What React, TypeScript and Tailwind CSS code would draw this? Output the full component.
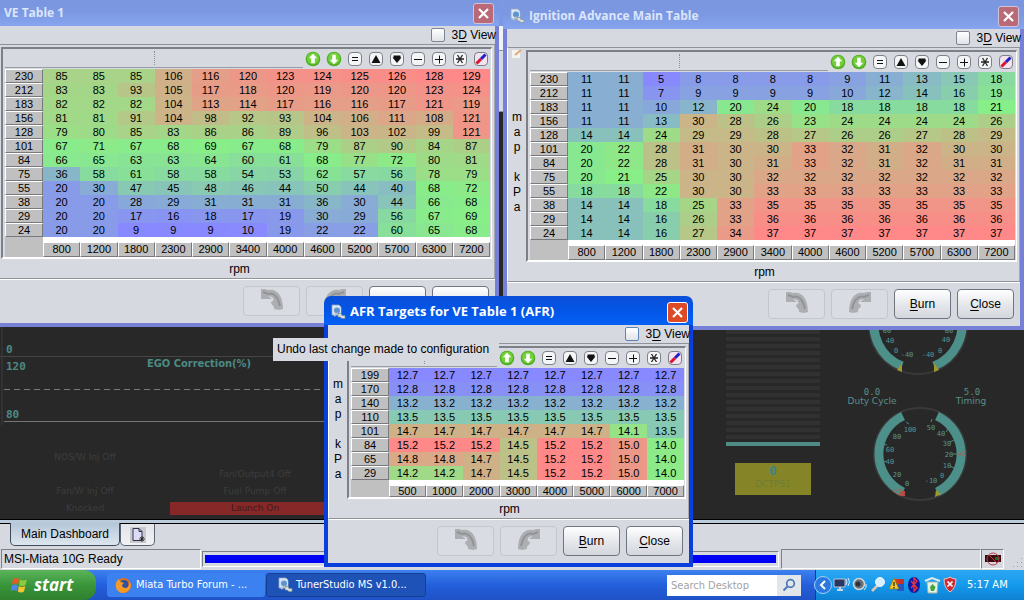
import { useId } from "react";
import type { ReactNode } from "react";
import { clsx } from "clsx";

type TuneTable = {
  title: string;
  rpm: number[];
  rows: { load: number; cells: number[] }[];
  digits: number;
};

const fill = (n: number, v: number) => Array<number>(n).fill(v);

const RPM = [800, 1200, 1800, 2300, 2900, 3400, 4000, 4600, 5200, 5700, 6300, 7200];

const VE_TABLE: TuneTable = {
  title: "VE Table 1",
  rpm: RPM,
  digits: 0,
  rows: [
    { load: 230, cells: [85, 85, 85, 106, 116, 120, 123, 124, 125, 126, 128, 129] },
    { load: 212, cells: [83, 83, 93, 105, 117, 118, 120, 119, 120, 120, 123, 124] },
    { load: 183, cells: [82, 82, 82, 104, 113, 114, 117, 116, 116, 117, 121, 119] },
    { load: 156, cells: [81, 81, 91, 104, 98, 92, 93, 104, 106, 111, 108, 121] },
    { load: 128, cells: [79, 80, 85, 83, 86, 86, 89, 96, 103, 102, 99, 121] },
    { load: 101, cells: [67, 71, 67, 68, 69, 67, 68, 79, 87, 90, 84, 87] },
    { load: 84, cells: [66, 65, 63, 63, 64, 60, 61, 68, 77, 72, 80, 81] },
    { load: 75, cells: [36, 58, 61, 58, 58, 54, 53, 62, 57, 56, 78, 79] },
    { load: 55, cells: [20, 30, 47, 45, 48, 46, 44, 50, 44, 40, 68, 72] },
    { load: 38, cells: [20, 20, 28, 29, 31, 31, 31, 36, 30, 44, 66, 68] },
    { load: 29, cells: [20, 20, 17, 16, 18, 17, 19, 30, 29, 56, 67, 69] },
    { load: 24, cells: [20, 20, 9, 9, 9, 10, 19, 22, 22, 60, 65, 68] },
  ],
};

const IGNITION_TABLE: TuneTable = {
  title: "Ignition Advance Main Table",
  rpm: RPM,
  digits: 0,
  rows: [
    { load: 230, cells: [11, 11, 5, 8, 8, 8, 8, 9, 11, 13, 15, 18] },
    { load: 212, cells: [11, 11, 7, 9, 9, 9, 9, 10, 12, 14, 16, 19] },
    { load: 183, cells: [11, 11, 10, 12, 20, 24, 20, 18, 18, 18, 18, 21] },
    { load: 156, cells: [11, 11, 13, 30, 28, 26, 23, 24, 24, 24, 24, 26] },
    { load: 128, cells: [14, 14, 24, 29, 29, 28, 27, 26, 26, 27, 28, 29] },
    { load: 101, cells: [20, 22, 28, 31, 30, 30, 33, 32, 31, 32, 30, 30] },
    { load: 84, cells: [20, 22, 28, 31, 30, 31, 33, 32, 31, 32, 31, 31] },
    { load: 75, cells: [20, 21, 25, 30, 30, ...fill(7, 32)] },
    { load: 55, cells: [18, 18, 22, 30, 30, ...fill(7, 33)] },
    { load: 38, cells: [14, 14, 18, 25, 33, ...fill(7, 35)] },
    { load: 29, cells: [14, 14, 16, 26, 33, ...fill(7, 36)] },
    { load: 24, cells: [14, 14, 16, 27, 34, ...fill(7, 37)] },
  ],
};

const AFR_TABLE: TuneTable = {
  title: "AFR Targets for VE Table 1 (AFR)",
  rpm: [500, 1000, 2000, 3000, 4000, 5000, 6000, 7000],
  digits: 1,
  rows: [
    { load: 199, cells: fill(8, 12.7) },
    { load: 170, cells: fill(8, 12.8) },
    { load: 140, cells: fill(8, 13.2) },
    { load: 110, cells: fill(8, 13.5) },
    { load: 101, cells: [...fill(6, 14.7), 14.1, 13.5] },
    { load: 84, cells: [15.2, 15.2, 15.2, 14.5, 15.2, 15.2, 15.0, 14.0] },
    { load: 65, cells: [14.8, 14.8, 14.7, 14.5, 15.2, 15.2, 15.0, 14.0] },
    { load: 29, cells: [14.2, 14.2, 14.7, 14.5, 15.2, 15.2, 15.0, 14.0] },
  ],
};

// blue (low) -> green (middle) -> red (high)
function heat(v: number, min: number, max: number) {
  const stops = [
    [136, 136, 255],
    [136, 238, 136],
    [255, 136, 136],
  ];
  const t = ((v - min) / (max - min)) * 2;
  const i = t >= 1 ? 1 : 0;
  const [r, g, b] = stops[i].map((c, k) => Math.round(c + (stops[i + 1][k] - c) * (t - i)));
  return `rgb(${r}, ${g}, ${b})`;
}

function AppIcon() {
  return (
    <svg width="16" height="16" viewBox="0 0 16 16" className="shrink-0">
      <path d="M2 1h7l2 2v8H2z" fill="#dfe8f4" stroke="#8fa4bf" strokeWidth=".8" />
      <circle cx="7" cy="6.500" r="3.600" fill="#5f93cf" stroke="#cfe4fb" strokeWidth="1.200" />
      <path d="M4 12l4-3" stroke="#b5c2c9" strokeWidth="1.800" />
      <path d="M8 9.500h3l1 2h3v3h-3l-2-1.500H8z" fill="#d6e0dc" stroke="#7d8d93" strokeWidth=".7" />
    </svg>
  );
}

function RoundArrow({ down }: { down?: boolean }) {
  return (
    <svg width="16" height="16" viewBox="0 0 16 16" className="-m-px">
      <circle cx="8" cy="8" r="7.300" fill="#4fae22" />
      <circle cx="8" cy="7.500" r="6" fill="#74cf3c" />
      <path
        d="M8 2.800l4.200 4.400H9.800v5H6.200v-5H3.800z"
        fill="#fff"
        transform={down ? "rotate(180 8 8)" : undefined}
      />
    </svg>
  );
}

function Key({ children, glow }: { children: ReactNode; glow?: boolean }) {
  return (
    <svg width="14" height="14" viewBox="0 0 14 14">
      <rect
        x=".5"
        y=".5"
        width="13"
        height="13"
        rx="3.500"
        fill={glow ? "#f1e3ef" : "#f4f5f7"}
        stroke="#7d8087"
      />
      {children}
    </svg>
  );
}

const TOOLS: { name: string; icon: ReactNode }[] = [
  { name: "Increase", icon: <RoundArrow /> },
  { name: "Decrease", icon: <RoundArrow down /> },
  { name: "Set to", icon: <Key><path d="M4 5.500h6M4 8.500h6" stroke="#111" /></Key> },
  { name: "Step up", icon: <Key><path d="M7 3l4.500 8h-9z" fill="#111" /></Key> },
  { name: "Step down", icon: <Key><path d="M3.500 3.500h7v2h1L7 11 2.500 5.500h1z" fill="#111" /></Key> },
  { name: "Subtract", icon: <Key><path d="M3 7.500h8" stroke="#111" /></Key> },
  { name: "Add", icon: <Key><path d="M3 7.500h8M7.500 3.500v8" stroke="#111" /></Key> },
  {
    name: "Multiply",
    icon: <Key><path d="M3 7h8M4.500 3l5 8M9.500 3l-5 8" stroke="#222" strokeWidth="1.300" /></Key>,
  },
  {
    name: "Interpolate",
    icon: (
      <Key glow>
        <path d="M2.500 11.500l4.500-4.500" stroke="#e01030" strokeWidth="3" />
        <path d="M7 7l4.500-4.500" stroke="#2020c8" strokeWidth="3" />
      </Key>
    ),
  },
];

function BentArrow({ redo }: { redo?: boolean }) {
  return (
    <svg width="24" height="24" viewBox="0 0 24 24" className="-mt-1">
      <g transform={redo ? "translate(24 0) scale(-1 1)" : undefined}>
        <path
          d="M1 2h4l3 1c9-2 15 6 15 19l-4 1-5-1c1-3-3-4-3-7 3-1 3-3 1-5l-4-1 4 3H1z"
          fill="#adaeb1"
        />
        <path d="M3 5l5 2c6-2 10 3 12 12" fill="none" stroke="#929396" strokeWidth="2" />
      </g>
    </svg>
  );
}

function ActionButton({ children, label, disabled }: { children: ReactNode; label?: string; disabled?: boolean }) {
  return (
    <button
      disabled={disabled}
      aria-label={label}
      className={clsx(
        "flex h-[30px] w-[57px] items-center justify-center rounded-[4px] border text-[12px]",
        disabled
          ? "border-[#c3c6cd] bg-[#d9dce2]"
          : "border-[#6f7580] bg-linear-to-b from-white via-[#e6e8ec] to-[#d3d6dc] text-black"
      )}
    >
      {children}
    </button>
  );
}

function TableGrid({ table }: { table: TuneTable }) {
  const all = table.rows.flatMap((r) => r.cells);
  const min = Math.min(...all);
  const max = Math.max(...all);
  const bevel = "border-t border-l border-b border-r border-t-white border-l-white border-b-[#77797d] border-r-[#77797d] bg-[#c0c0c0]";

  return (
    <table className="w-full table-fixed border-separate border-spacing-0 text-center text-[11px] leading-[12px] text-black">
      <colgroup>
        <col className="w-[38px]" />
        {table.rpm.map((r) => (
          <col key={r} />
        ))}
      </colgroup>
      <tbody>
        {table.rows.map((row) => (
          <tr key={row.load} className="h-[14px]">
            <th scope="row" className={clsx(bevel, "p-0 font-normal")}>
              {row.load}
            </th>
            {row.cells.map((v, i) => (
              <td key={i} className="p-0" style={{ backgroundColor: heat(v, min, max) }}>
                {v.toFixed(table.digits)}
              </td>
            ))}
          </tr>
        ))}
      </tbody>
      <tfoot>
        <tr>
          <td className="bg-[#c0c0c0] p-0" />
          {table.rpm.map((r) => (
            <th key={r} scope="col" className="bg-white p-0 pt-[5px] font-normal">
              <div className={clsx(bevel, table.rows.length > 8 ? "leading-[13px]" : "leading-[10px]")}>{r}</div>
            </th>
          ))}
        </tr>
      </tfoot>
    </table>
  );
}

type TableWindowProps = {
  table: TuneTable;
  loadLabel?: string;
  active?: boolean;
  className: string;
};

function TableWindow({ table, loadLabel = "", active, className }: TableWindowProps) {
  const id = useId();
  return (
    <section className={clsx("absolute", className)}>
      <header
        className={clsx(
          "flex h-[29px] items-center gap-1 rounded-t-[7px] pt-[3px] pr-[5px] pl-[6px]",
          active
            ? "bg-linear-to-b from-[#0a4fd8] via-[#0355e6] to-[#0561f5]"
            : "bg-linear-to-b from-[#7a96df] via-[#7c98e2] to-[#86a5ee]"
        )}
      >
        <AppIcon />
        <h2
          className={clsx(
            "flex-1 truncate font-['Open_Sans','Noto_Sans',sans-serif] font-bold",
            active ? "text-[13px] text-white" : "text-[12px] text-[#dbe6fa]"
          )}
        >
          {table.title}
        </h2>
        <button
          aria-label="Close window"
          className={clsx(
            "flex size-[21px] items-center justify-center rounded-[3px] border",
            active ? "border-white bg-[#dd4a26]" : "border-[#d3c4dc] bg-[#ba6a76]"
          )}
        >
          <svg width="13" height="13" viewBox="0 0 13 13">
            <path d="M2 2l9 9M11 2l-9 9" stroke="#fff" strokeWidth="2.200" />
          </svg>
        </button>
      </header>

      <div
        className={clsx(
          "border-x-4 border-b-4 bg-[#d6d9e0]",
          active ? "border-[#0a3fdc]" : "border-[#7680d6]"
        )}
      >
        <div className="-mr-1 flex h-[18px] items-center justify-end gap-[7px] overflow-hidden pr-[3px] text-[12px] text-black">
          <input
            id={id}
            type="checkbox"
            className={clsx(
              "size-[14px] appearance-none rounded-[2px] border bg-linear-to-b from-white to-[#e0e3e8]",
              active ? "border-[#5b84b8]" : "border-[#7d8592]"
            )}
          />
          <label htmlFor={id}>
            3<u className="underline-offset-2">D</u> View
          </label>
        </div>

        <div className="flex border-t border-b border-l border-t-[#8f9298] border-b-[#8f9298] border-l-white">
          <div className="flex w-[18px] flex-col items-center text-[12px] leading-[15px] text-black">
            <svg width="12" height="12" viewBox="0 0 12 12">
              <path d="M1 2h8v8H1z" fill="#f3f4f2" />
              <path d="M4 7l6-5" stroke="#e0ac72" strokeWidth="2" />
            </svg>
            <div className="flex flex-1 flex-col justify-center pb-4">
              {loadLabel.split("").map((c, i) => (
                <span key={i} className="h-[15px] text-center">
                  {c}
                </span>
              ))}
            </div>
          </div>
          <div className="min-w-0 flex-1 border-r border-[#a5a8ae]">
            <div className="mt-[2px] mr-[2px] border-t-2 border-r border-b-2 border-l-2 border-t-[#7d8087] border-r-white border-b-white border-l-[#7d8087] pr-px pl-[2px]">
              <div className="flex h-5 pb-px">
                <div className="flex flex-1 justify-center border-b border-[#9a9da3] py-[2px]">
                  <span className="border-l border-dotted border-[#8c8f96]" />
                </div>
                <div className="ml-[3px] flex items-center gap-[7px] pr-[2px]">
                  {TOOLS.map((t) => (
                    <button key={t.name} aria-label={t.name} className="size-[14px]">
                      {t.icon}
                    </button>
                  ))}
                </div>
              </div>
              <TableGrid table={table} />
            </div>
            <div className="pt-px pr-4 text-center text-[12px] leading-[18px] text-black">rpm</div>
          </div>
        </div>

        <div className="flex justify-end gap-[6px] border-t border-white pt-[6px] pr-[6px] pb-[7px]">
          <ActionButton disabled label="Undo">
            <BentArrow />
          </ActionButton>
          <ActionButton disabled label="Redo">
            <BentArrow redo />
          </ActionButton>
          <ActionButton>
            <span>
              <u className="underline-offset-2">B</u>urn
            </span>
          </ActionButton>
          <ActionButton>
            <span>
              <u className="underline-offset-2">C</u>lose
            </span>
          </ActionButton>
        </div>
      </div>
    </section>
  );
}

function EgoChart() {
  return (
    <svg viewBox="0 0 340 100" width="340" height="100" className="block font-['DejaVu_Sans_Mono',monospace] font-bold">
      <path d="M2 0V100" stroke="#3c3c3c" />
      <path d="M0 31.500H340" stroke="#454545" />
      <path d="M4 64.500H340" stroke="#7a7a7a" strokeDasharray="6 4" />
      <path d="M4 96.500H340" stroke="#757575" />
      <g fill="#4c8a84" fontSize="11">
        <text x="6" y="28">0</text>
        <text x="6" y="45">120</text>
        <text x="6" y="93">80</text>
        <text x="199" y="42" textAnchor="middle" className="font-['DejaVu_Sans_Condensed','DejaVu_Sans',sans-serif]" fontSize="11">
          EGO Correction(%)
        </text>
      </g>
    </svg>
  );
}

type Tick = [number, number, string];

const UPPER_TICKS: Tick[] = [
  [47, 5, "60"], [50, 15, "40"], [56, 25, "0"], [67, 29, "-40"],
  [109, 5, "60"], [106, 14, "40"], [100, 25, "0"], [88, 29, "-40"],
];

const LOWER_TICKS: Tick[] = [
  [70, 104, "100"], [57, 111, "80"], [50, 124, "60"], [50, 136, "40"], [57, 149, "20"], [67, 158, "0"],
  [91, 102, "50"], [101, 108, "40"], [107, 118, "30"], [109, 129, "20"], [107, 140, "10"], [102, 150, "0"], [91, 155, "-10"],
];

function Gauges() {
  return (
    <svg viewBox="0 0 184 191" width="184" height="191" className="font-['DejaVu_Sans_Mono',monospace]">
      <circle cx="78" cy="-3" r="49" fill="none" stroke="#393939" strokeWidth="2" />
      <path d="M62 38A44 44 0 0 1 36 -16" fill="none" stroke="#4d8f89" strokeWidth="9" />
      <path d="M94 38A44 44 0 0 0 120 -16" fill="none" stroke="#4d8f89" strokeWidth="9" />
      <path d="M57 42l5-7v9zM94 44v-9l5 7z" fill="#a09a2c" />

      <circle cx="80" cy="126" r="46" fill="none" stroke="#393939" strokeWidth="2" />
      <path d="M63 164A42 42 0 0 1 63 88" fill="none" stroke="#4d8f89" strokeWidth="9" />
      <path d="M97 164A42 42 0 0 0 97 88" fill="none" stroke="#4d8f89" strokeWidth="9" />
      <path d="M96 162l5 4-6 3z" fill="#a09a2c" />
      <path d="M60 163h5v5h-5z" fill="#b05045" />
      <path d="M53 163l9-2-3 6zM126 123l-8 3 8 2" fill="none" stroke="#a0685e" />

      <g fill="#559690" fontSize="7" textAnchor="middle">
        {[...UPPER_TICKS, ...LOWER_TICKS].map(([x, y, s], i) => (
          <text key={i} x={x} y={y}>
            {s}
          </text>
        ))}
      </g>
      <g stroke="#4d8a85">
        <path d="M43 116l4 1M43 134l4-1M113 126h4M110 114l4-2M110 138l4 2M66 94l3 2M91 94l1-3M106 104l2-3" />
      </g>
      <g fill="#5b8f8a" fontSize="9" textAnchor="middle">
        <text x="32" y="67">0.0</text>
        <text x="32" y="76" className="font-['DejaVu_Sans',sans-serif]">Duty Cycle</text>
        <text x="132" y="67">5.0</text>
        <text x="131" y="76" className="font-['DejaVu_Sans',sans-serif]">Timing</text>
      </g>
    </svg>
  );
}

function Dashboard() {
  return (
    <div className="flex flex-1 items-end justify-between overflow-hidden border-b border-black bg-[#282828] font-['DejaVu_Sans',sans-serif]">
      <div>
        <EgoChart />
        <div className="grid w-[340px] grid-cols-2 pt-[24px] pb-[2px] text-center text-[9px] leading-[17px] text-[#3d3d3d]">
          <span>NOS/W Inj Off</span>
          <span />
          <span />
          <span>Fan/Output4 Off</span>
          <span>Fan/W Inj Off</span>
          <span>Fuel Pump Off</span>
          <span>Knocked</span>
          <span className="my-[2px] bg-[#872828] leading-[13px] text-[#3d1c1c]">Launch On</span>
        </div>
      </div>
      <div className="flex items-end">
        <div className="flex w-[94px] flex-col pb-[24px]">
          {Array.from({ length: 16 }, (_, i) => (
            <span key={i} className="mb-[3px] h-1 bg-[#313131]" />
          ))}
          <span className="h-1 bg-[#4f8c86]" />
          <div className="mx-[9px] mt-[17px] h-[32px] bg-[#858528] text-center">
            <p className="font-['DejaVu_Sans_Mono',monospace] text-[13px] leading-[16px] font-bold text-[#3f8580]">0</p>
            <p className="text-[9px] leading-[10px] text-[#6c7d35]">DCTPS1</p>
          </div>
        </div>
        <div className="ml-5">
          <Gauges />
        </div>
      </div>
    </div>
  );
}

function StatusBar() {
  const sunken = "border border-t-[#7d8087] border-l-[#7d8087] border-r-white border-b-white";
  return (
    <div className="flex h-[21px] bg-[#d6d9e0] pb-px pl-px text-[12px] leading-[18px] text-black">
      <div className={clsx(sunken, "w-[200px] px-[2px]")}>MSI-Miata 10G Ready</div>
      <div className={clsx(sunken, "my-[2px] ml-px flex-1 px-[2px] py-[3px]")}>
        <div className="h-full bg-[#0000f6]" />
      </div>
      <div className={clsx(sunken, "ml-[2px] w-[200px]")} />
      <div className={clsx(sunken, "flex w-[23px] items-center justify-center")}>
        <svg width="16" height="16" viewBox="0 0 16 16">
          <path d="M0 4h16v7H0z" fill="#3b0a0e" />
          <path d="M10 6h4v3h-4z" fill="#1d6a2c" />
          <circle cx="8" cy="8" r="6" fill="none" stroke="#c0394a" />
          <path d="M4 4l8 8" stroke="#c0394a" />
        </svg>
      </div>
      <div className="flex w-5 items-end justify-end p-px">
        <svg width="10" height="10" viewBox="0 0 10 10" fill="#9b9ea5">
          <path d="M8 0h1v1H8zM8 4h1v1H8zM4 4h1v1H4zM8 8h1v1H8zM4 8h1v1H4zM0 8h1v1H0z" />
        </svg>
      </div>
    </div>
  );
}

function TrayIcons() {
  return (
    <svg width="127" height="20" viewBox="0 0 127 20" className="shrink-0">
      <path d="M1 4h11v8H1z" fill="#2a3560" stroke="#b9c6dd" />
      <path d="M4 15h6M7 12v3" stroke="#cbd6ea" strokeWidth="2" />
      <path d="M13 4q2 3 0 6M15 3q3 4 0 8" stroke="#dceaff" fill="none" />
      <circle cx="26" cy="9" r="5.500" fill="#68707a" stroke="#cfd6dd" strokeWidth="1.500" />
      <circle cx="25" cy="9" r="2.500" fill="#2d3238" />
      <path d="M31 15q3-2 2-6" stroke="#dfeeff" fill="none" />
      <path d="M39 16l6-6" stroke="#e0c7b0" strokeWidth="2.500" />
      <circle cx="47" cy="7" r="4.500" fill="#d9efff" stroke="#eef7ff" />
      <path d="M61 4h6v6h-6z" fill="#d13a22" />
      <path d="M64 9h7v7h-7z" fill="#2755c8" />
      <path d="M66 4h5v5h-5z" fill="#c8302b" />
      <path d="M61 3l5 11H56z" fill="#f5c81e" stroke="#8a6a10" strokeWidth=".6" />
      <path d="M61 7v4M61 12v1.500" stroke="#222" strokeWidth="1.300" />
      <ellipse cx="81" cy="10" rx="6" ry="8" fill="#0d1aa6" />
      <path d="M78 6l6 7-3 3V3l3 3-6 7" fill="none" stroke="#e03448" strokeWidth="1.400" />
      <path d="M94 7h11l-1 11h-9z" fill="#e6f2e4" stroke="#9fb4a8" />
      <path d="M92 6l7-3 8 3" stroke="#dfe8ee" strokeWidth="2" fill="none" />
      <path d="M97 12l2.500-3 3 3-1.500 4h-3z" fill="#43a53c" />
      <path d="M111 4q3.500 0 6-2 2.500 2 6 2 0 9-6 13-6-4-6-13z" fill="#cc2b33" stroke="#f3c6c6" />
      <path d="M114.500 6.500l5 5M119.500 6.500l-5 5" stroke="#fff" strokeWidth="1.700" />
    </svg>
  );
}

function Taskbar() {
  return (
    <footer className="flex h-[30px] items-stretch bg-linear-to-b from-[#3d80ee] via-[#245fdc] to-[#1f52c6] font-['DejaVu_Sans_Condensed','DejaVu_Sans',sans-serif] text-[11px] text-white">
      <button className="flex w-24 items-center gap-[6px] rounded-r-[12px] bg-linear-to-b from-[#5bb45b] via-[#3a963a] to-[#2f7f2f] pl-[10px] font-['Open_Sans',sans-serif] text-[17px] font-bold italic">
        <svg width="18" height="18" viewBox="0 0 18 18">
          <path d="M3 3q3-2 6 0L8 8.500q-3-2-6 0z" fill="#e65a28" />
          <path d="M10 3.500q3 2 7 0L15.500 9q-3 2-6.500 0z" fill="#8ccb3a" />
          <path d="M1.800 9.500q3-2 6 0l-1 5.500q-3-2-6 0z" fill="#4f86ea" />
          <path d="M8.800 10q3 2 6.500 0L14 15.500q-3 2-6.200 0z" fill="#f6c430" />
        </svg>
        start
      </button>
      <div className="ml-[11px] flex flex-1 gap-px py-[3px]">
        <button className="flex w-[158px] items-center gap-1 rounded-[3px] bg-[#3c81f0] pl-2">
          <svg width="17" height="17" viewBox="0 0 17 17">
            <circle cx="8.500" cy="8.500" r="7.500" fill="#e0701a" />
            <circle cx="9" cy="7.500" r="4.500" fill="#33509e" />
            <path d="M1 6q1-3 3-4 0 2 2 3l3 1-2 2q0 3 4 3 4-1 3-7 4 6-1 10-6 4-10 0-3-3-2-8z" fill="#f49a26" />
          </svg>
          Miata Turbo Forum - ...
        </button>
        <button className="flex w-[160px] items-center gap-[3px] rounded-[3px] border border-[#153f94] bg-[#1e52b7] pl-[10px]">
          <AppIcon />
          TunerStudio MS v1.0...
        </button>
      </div>
      <div className="mr-[14px] flex items-center">
        <input
          aria-label="Search Desktop"
          placeholder="Search Desktop"
          className="h-[21px] w-[110px] bg-white pl-1 text-[11px] text-black placeholder:text-[#a3a3a3]"
        />
        <button aria-label="Search" className="flex h-[21px] w-6 items-center justify-center bg-[#e2e5ea]">
          <svg width="14" height="14" viewBox="0 0 14 14">
            <circle cx="8.500" cy="5.500" r="3.800" fill="none" stroke="#4a78b8" strokeWidth="1.700" />
            <path d="M5.500 8.500L1.500 12.500" stroke="#4a78b8" strokeWidth="2" />
          </svg>
        </button>
      </div>
      <div className="flex w-[209px] items-center gap-px border-l border-[#0b3aa0] bg-linear-to-b from-[#2ba6f2] via-[#149aec] to-[#0f80d2]">
        <button aria-label="Show hidden icons" className="-ml-[2px] flex size-[18px] items-center justify-center rounded-full border border-[#9fd2fb] bg-[#2a78e0]">
          <svg width="8" height="10" viewBox="0 0 8 10">
            <path d="M6 1L2 5l4 4" stroke="#fff" strokeWidth="2" fill="none" />
          </svg>
        </button>
        <TrayIcons />
        <time className="ml-[6px] whitespace-nowrap">5:17 AM</time>
      </div>
    </footer>
  );
}

export default function App() {
  return (
    <main className="relative flex h-screen flex-col overflow-hidden bg-[#282828] font-['Liberation_Sans',Arial,sans-serif]">
      <div className="h-[26px] bg-[#7b98e4]" />
      <div className="h-[24px] bg-[#f1f2f5]" />
      <div className="h-[62px] border-y border-[#8f9298] bg-[#d6d9e0]" />

      <Dashboard />
      <div className="h-[3px] bg-[#bccbdc]" />
      <nav className="flex h-[26px] border-t border-black bg-[#d6d9e0] pl-[10px] text-[12px] text-black">
        <button className="-mt-px h-[23px] w-[110px] rounded-b-[5px] border border-t-0 border-[#3c4a5c] bg-linear-to-b from-[#b4c7d8] to-[#dde6ee]">
          Main Dashboard
        </button>
        <button
          aria-label="New dashboard"
          className="flex h-[22px] w-[35px] items-center justify-center rounded-b-[5px] border border-t-0 border-[#5a6472] bg-linear-to-b from-[#e3e5e9] to-[#f1f2f4]"
        >
          <svg width="16" height="16" viewBox="0 0 16 16">
            <path d="M0 0h16v16H0z" fill="#c8cad0" />
            <path d="M3 1.500h6l3 3v9H3z" fill="#dcdcf6" stroke="#33334d" />
            <path d="M9 1.500v3h3" fill="none" stroke="#33334d" />
            <path d="M12 9v6M9 12h6M10 10l4 4M14 10l-4 4" stroke="#222" strokeWidth=".8" />
          </svg>
        </button>
      </nav>
      <StatusBar />
      <Taskbar />

      <TableWindow table={VE_TABLE} className="top-[-3px] left-[-22px] w-[521px]" />
      <TableWindow table={IGNITION_TABLE} loadLabel="map kPa" className="top-0 left-[503px] w-[521px]" />
      <TableWindow table={AFR_TABLE} loadLabel="map kPa" active className="top-[296px] left-[324px] w-[369px]" />

      <div role="tooltip" className="absolute top-[338px] left-[273px] bg-[#d6d9e0] pr-[10px] pl-1 text-[12px] leading-[23px] whitespace-nowrap text-black">
        Undo last change made to configuration
      </div>
    </main>
  );
}
